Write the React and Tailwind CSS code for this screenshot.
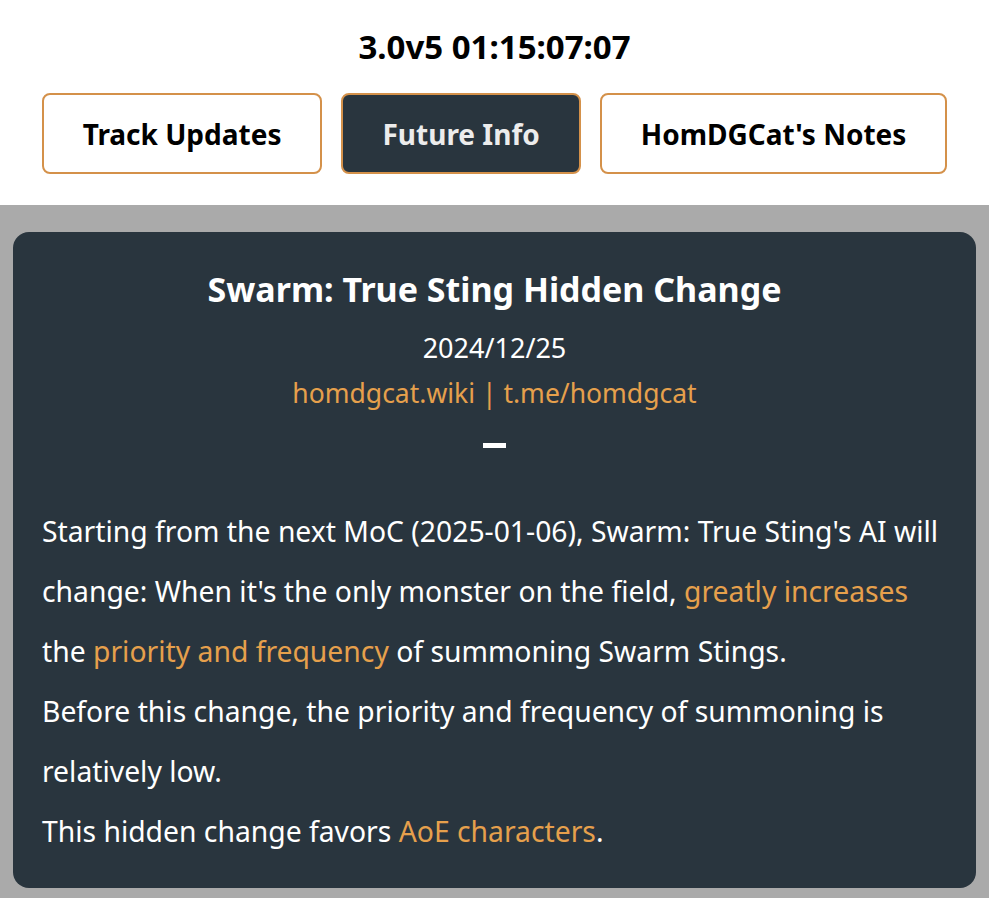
import React from "react";

const tabs = [
  { id: "track", label: "Track Updates" },
  { id: "future", label: "Future Info" },
  { id: "notes", label: "HomDGCat's Notes" },
];

const Hl = ({ children }) => <span className="text-[#e6a04c]">{children}</span>;

export default function App() {
  const [active, setActive] = React.useState("future");

  return (
    <div className="min-h-screen bg-[#aaaaaa] font-['Noto_Sans',sans-serif]">
      {/* Header */}
      <div className="bg-white h-[205px] flex flex-col items-center">
        <h1 className="mt-[27px] text-[33px] leading-[40px] font-bold text-black">3.0v5 01:15:07:07</h1>
        <div className="mt-[26px] flex justify-center gap-[19px]">
          {tabs.map((tab) => (
            <button
              key={tab.id}
              onClick={() => setActive(tab.id)}
              className={`h-[81px] px-[39px] rounded-lg border-2 border-[#d4914a] text-[28px] font-bold ${
                active === tab.id ? "bg-[#29353e] text-[#ececec]" : "bg-white text-black"
              }`}
            >
              {tab.label}
            </button>
          ))}
        </div>
      </div>

      {/* Card */}
      <div className="px-[13px] pt-[27px] pb-[12px]">
        <div className="bg-[#29353e] rounded-2xl px-[29px] pt-[35px] pb-[27px] text-white">
          <div className="flex flex-col items-center">
            <h2 className="text-[34px] leading-[45px] font-bold">Swarm: True Sting Hidden Change</h2>
            <div className="mt-[13px] text-[27px] leading-[45px]">2024/12/25</div>
            <div className="mt-[1px] text-[26.5px] leading-[45px] text-[#e6a04c]">homdgcat.wiki | t.me/homdgcat</div>
            <div className="mt-[27px] w-[23px] h-[5px] bg-white"></div>
          </div>
          <div className="mt-[53px] text-[28.3px] leading-[60px]">
            <p>
              Starting from the next MoC (2025-01-06), Swarm: True Sting's AI will change: When it's the only
              monster on the field, <Hl>greatly increases</Hl> the <Hl>priority and frequency</Hl> of summoning
              Swarm Stings.
            </p>
            <p>Before this change, the priority and frequency of summoning is relatively low.</p>
            <p>
              This hidden change favors <Hl>AoE characters</Hl>.
            </p>
          </div>
        </div>
      </div>
    </div>
  );
}
